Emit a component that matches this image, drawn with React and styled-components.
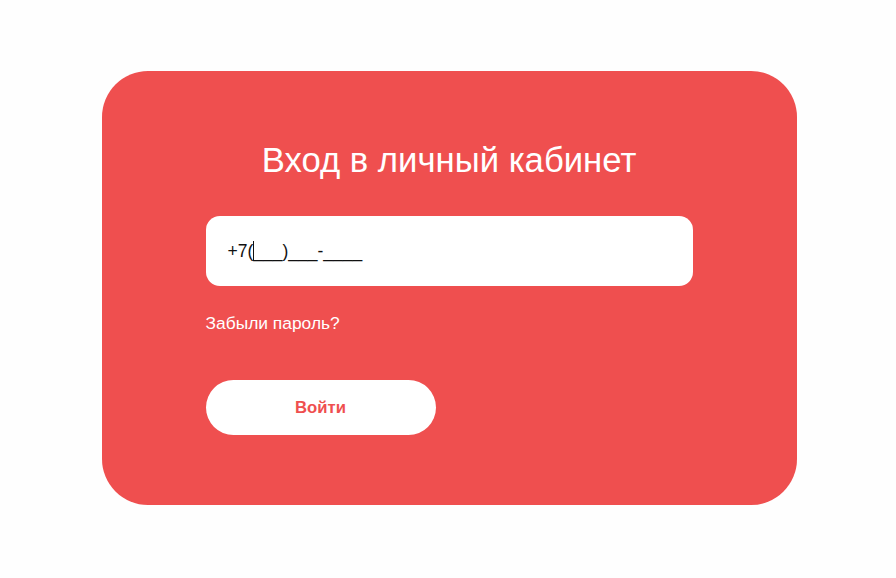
import React from "react";
import styled, { createGlobalStyle } from "styled-components";

const Global = createGlobalStyle`
  html, body { margin: 0; padding: 0; background: #fefefe; }
  body { font-family: "Liberation Sans", Arial, sans-serif; }
`;

const Page = styled.div`
  width: 896px;
  height: 578px;
  display: flex;
  justify-content: center;
  padding-top: 71px;
  box-sizing: border-box;
`;

const Card = styled.form`
  width: 695px;
  height: 434px;
  box-sizing: border-box;
  background: #ef4f4f;
  border-radius: 46px;
  padding: 68px 104px 0 104px;
  display: flex;
  flex-direction: column;
  margin-left: 2px;
`;

const Title = styled.h1`
  margin: 0;
  font-weight: 400;
  font-size: 34.7px;
  line-height: 42px;
  color: #ffffff;
  text-align: center;
`;

const Field = styled.div`
  margin-top: 35px;
  height: 70px;
  background: #ffffff;
  border-radius: 14px;
  display: flex;
  align-items: center;
  padding-left: 22px;
  font-size: 17.5px;
  color: #111;
`;

const Caret = styled.span`
  display: inline-block;
  width: 1px;
  height: 20px;
  background: #111;
  vertical-align: -4px;
  margin-right: -1px;
`;

const Link = styled.a`
  margin-top: 27px;
  font-size: 17.4px;
  line-height: 20px;
  color: #ffffff;
  text-decoration: none;
  align-self: flex-start;
`;

const Button = styled.button`
  margin-top: 47px;
  width: 230px;
  height: 55px;
  border: none;
  border-radius: 28px;
  background: #ffffff;
  color: #ef4f4f;
  font-family: "Liberation Sans", Arial, sans-serif;
  font-weight: 700;
  font-size: 16.7px;
  cursor: pointer;
`;

export default function App() {
  return (
    <>
      <Global />
      <Page>
        <Card onSubmit={(e) => e.preventDefault()}>
          <Title>Вход в личный кабинет</Title>
          <Field>
            <span>+7(<Caret />___)___-____</span>
          </Field>
          <Link href="#">Забыли пароль?</Link>
          <Button type="submit">Войти</Button>
        </Card>
      </Page>
    </>
  );
}
